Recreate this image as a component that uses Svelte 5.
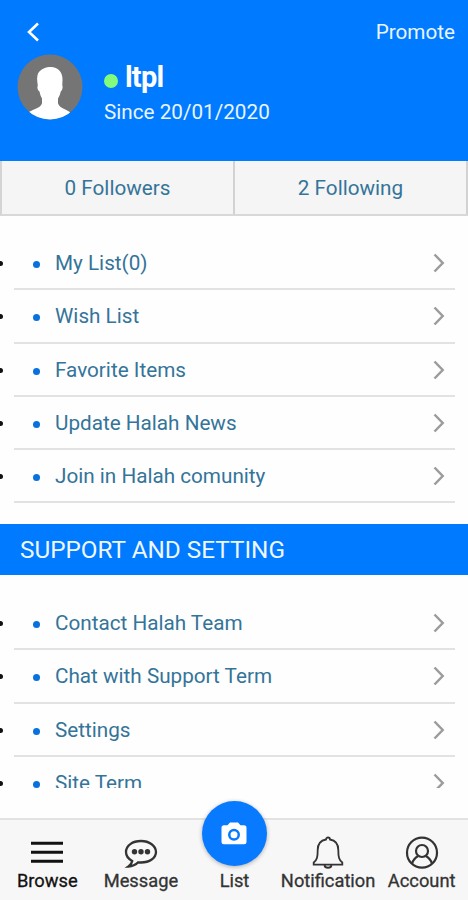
<script>
  const mainItems = [
    'My List(0)',
    'Wish List',
    'Favorite Items',
    'Update Halah News',
    'Join in Halah comunity',
  ];

  const supportItems = [
    'Contact Halah Team',
    'Chat with Support Term',
    'Settings',
    'Site Term',
  ];
</script>

{#snippet menu(items)}
  <ul class="menu">
    {#each items as item}
      <li>
        <span class="marker"></span>
        <a class="row" href="#top">
          <span class="bullet"></span>
          <span class="label">{item}</span>
          <svg class="chevron" width="12" height="20" viewBox="0 0 12 20">
            <path d="M1.5 1.5 9.7 10l-8.2 8.5" />
          </svg>
        </a>
      </li>
    {/each}
  </ul>
{/snippet}

<div class="app">
  <header>
    <div class="topbar">
      <svg class="back" width="14" height="20" viewBox="0 0 14 20">
        <path d="M12 1.5 3 10l9 8.5" />
      </svg>
      <span class="promote">Promote</span>
    </div>
    <div class="profile">
      <svg class="avatar" width="66" height="66" viewBox="0 0 66 66">
        <defs>
          <clipPath id="avatar-clip"><circle cx="33" cy="33" r="32.5" /></clipPath>
        </defs>
        <g clip-path="url(#avatar-clip)">
          <rect width="66" height="66" fill="#757575" />
          <path
            fill="#fff"
            d="M21 19.500C24 14.500 29 13 34 13c7 0 11.500 5 11.500 12 0 3-.2 5-.2 6.500.7 1 .2 5-1.600 6-.4 3-1.700 5-2.700 7v5c1.500 4 5.500 5 10 7.500 2 1 3 2.500 4 4v6H9v-6c1-2 2.500-3 5-4 5-2.500 9.500-3.500 11-7.500v-5c-1-2-2-4-2.500-7-2-1-2.500-4-1.700-6-.6-4-1.300-8 .2-12z"
          />
        </g>
      </svg>
      <div class="who">
        <div class="name"><span class="online"></span>ltpl</div>
        <div class="since">Since 20/01/2020</div>
      </div>
    </div>
  </header>

  <div class="tabs">
    <div class="tab">0 Followers</div>
    <div class="tab">2 Following</div>
  </div>

  <div class="content">
    {@render menu(mainItems)}
    <h2>SUPPORT AND SETTING</h2>
    {@render menu(supportItems)}
  </div>

  <nav>
    <div class="item active">
      <svg width="34" height="34" viewBox="0 0 34 34">
        <path d="M1 7.200h32M1 16.200h32M1 25.200h32" stroke-width="3" />
      </svg>
      <span>Browse</span>
    </div>
    <div class="item">
      <svg width="34" height="34" viewBox="0 0 34 34">
        <path
          d="M17 5C8.500 5 2 9.600 2 16c0 4 2.500 7 6.200 9-.3 2-1.500 4-3.700 5.500 4.500-.2 7.500-2 9.700-4.200 1 .2 1.800.2 2.800.2 8.500 0 15-4.500 15-10.500S25.500 5 17 5z"
          stroke-width="2.300"
        />
        <g class="dots">
          <circle cx="10.500" cy="15.700" r="2.700" />
          <circle cx="17" cy="15.700" r="2.700" />
          <circle cx="23.500" cy="15.700" r="2.700" />
        </g>
      </svg>
      <span>Message</span>
    </div>
    <div class="item">
      <div class="fab">
        <svg width="26" height="23" viewBox="0 0 26 23">
          <path
            class="camera"
            fill-rule="evenodd"
            d="M9 .5h8l2.500 2.700H23a2.500 2.500 0 0 1 2.500 2.500v14A2.500 2.500 0 0 1 23 22.200H3A2.500 2.500 0 0 1 .5 19.700v-14A2.500 2.500 0 0 1 3 3.200h3.500zM13 6.700a6 6 0 1 0 0 12 6 6 0 0 0 0-12zm0 2.500a3.500 3.500 0 1 1 0 7 3.500 3.500 0 0 1 0-7z"
          />
        </svg>
      </div>
      <span>List</span>
    </div>
    <div class="item">
      <svg width="34" height="34" viewBox="0 0 34 34">
        <path
          d="M15 3.500a2 2 0 0 1 4 0c5.500 1 8.300 5 8.300 10.500 0 7 .7 10 4 12.500v2.200H2.700v-2.200c3.300-2.500 4-5.500 4-12.500C6.700 8.500 9.500 4.500 15 3.500zM13.500 29.500c.5 3 6.500 3 7 0"
          stroke-width="1.800"
        />
      </svg>
      <span>Notification</span>
    </div>
    <div class="item">
      <svg width="34" height="34" viewBox="0 0 34 34">
        <circle cx="17" cy="16.700" r="15" stroke-width="2.200" />
        <circle cx="17" cy="15" r="6" stroke-width="2.200" />
        <path d="M7 27.700c1-3.500 3-6 6.300-7.700M27 27.700c-1-3.500-3-6-6.300-7.700" stroke-width="2.200" />
      </svg>
      <span>Account</span>
    </div>
  </nav>
</div>

<style>
  :global(body) {
    background: #fefefe;
    font-family: Roboto, 'Liberation Sans', sans-serif;
  }

  .app {
    display: flex;
    flex-direction: column;
    width: 468px;
    height: 900px;
    overflow: hidden;
  }

  header {
    flex: none;
    box-sizing: border-box;
    height: 161px;
    padding-top: 11px;
    background: #007aff;
    color: #e8f5ff;
  }

  .topbar {
    display: flex;
    justify-content: space-between;
    align-items: center;
    height: 42px;
    padding: 0 13px 0 26px;
  }

  .back path {
    fill: none;
    stroke: #fff;
    stroke-width: 2.6;
  }

  .promote {
    font-size: 20.7px;
    line-height: 24px;
  }

  .profile {
    display: flex;
    padding: 1px 0 0 17px;
    gap: 21px;
  }

  .name {
    display: flex;
    align-items: center;
    height: 46px;
    color: #fff;
    font-size: 29px;
    font-weight: 700;
    letter-spacing: -0.8px;
  }

  .online {
    width: 14px;
    height: 14px;
    margin: 7px 7px 0 0;
    border-radius: 50%;
    background: #83fb7c;
  }

  .since {
    font-size: 20.7px;
    line-height: 24px;
  }

  .tabs {
    flex: none;
    display: flex;
    box-sizing: border-box;
    height: 55px;
    border-bottom: 2px solid #d8d8d8;
    border-left: 2px solid #d4d4d4;
    background: #f5f5f5;
  }

  .tab {
    flex: 1;
    border-right: 2px solid #d2d2d2;
    color: #347499;
    font-size: 20.7px;
    line-height: 55px;
    text-align: center;
  }

  .content {
    flex: none;
    height: 572px;
    overflow: hidden;
  }

  .menu {
    margin: 0;
    padding: 21px 0 20.5px;
    list-style: none;
  }

  h2 + .menu {
    padding-top: 22px;
  }

  .menu li {
    display: flex;
    align-items: center;
    height: 53.3px;
  }

  .marker {
    width: 2.5px;
    height: 5px;
    margin-right: 11.5px;
    border-radius: 0 3px 3px 0;
    background: #111;
  }

  .row {
    flex: none;
    display: flex;
    align-items: center;
    box-sizing: border-box;
    width: 441px;
    height: 100%;
    padding: 1px 10px 0 19px;
    border-bottom: 2px solid #e2e2e2;
    color: #347499;
    text-decoration: none;
  }

  .bullet {
    width: 7px;
    height: 7px;
    margin: 3px 15px 0 0;
    border-radius: 50%;
    background: #0871dd;
  }

  .label {
    flex: 1;
    font-size: 20.7px;
    line-height: 24px;
  }

  .chevron path {
    fill: none;
    stroke: #9c9c9c;
    stroke-width: 2.5;
  }

  h2 {
    margin: 0;
    padding-left: 20px;
    background: #007aff;
    color: #eef7ff;
    font-size: 24.3px;
    font-weight: 400;
    line-height: 51px;
  }

  nav {
    flex: none;
    display: grid;
    grid-template-columns: repeat(5, minmax(0, 1fr));
    box-sizing: border-box;
    height: 82px;
    margin-top: 30px;
    border-top: 2px solid #e2e2e2;
    background: #f7f7f7;
  }

  .item {
    position: relative;
    display: flex;
    flex-direction: column;
    align-items: center;
    justify-content: flex-end;
    height: 71px;
    padding-left: 1px;
    color: #333;
    font-size: 18.3px;
    line-height: 21px;
    white-space: nowrap;
    -webkit-text-stroke: 0.3px;
  }

  .active {
    color: #111;
  }

  .item svg {
    fill: none;
    stroke: currentColor;
  }

  .dots circle {
    fill: currentColor;
    stroke: none;
  }

  .fab {
    position: absolute;
    top: -19px;
    display: flex;
    align-items: center;
    justify-content: center;
    width: 65px;
    height: 65px;
    border-radius: 50%;
    background: #087aff;
    box-shadow: 0 1px 4px rgba(0, 0, 0, 0.3);
  }

  .item .camera {
    fill: #fff;
    stroke: none;
  }
</style>
